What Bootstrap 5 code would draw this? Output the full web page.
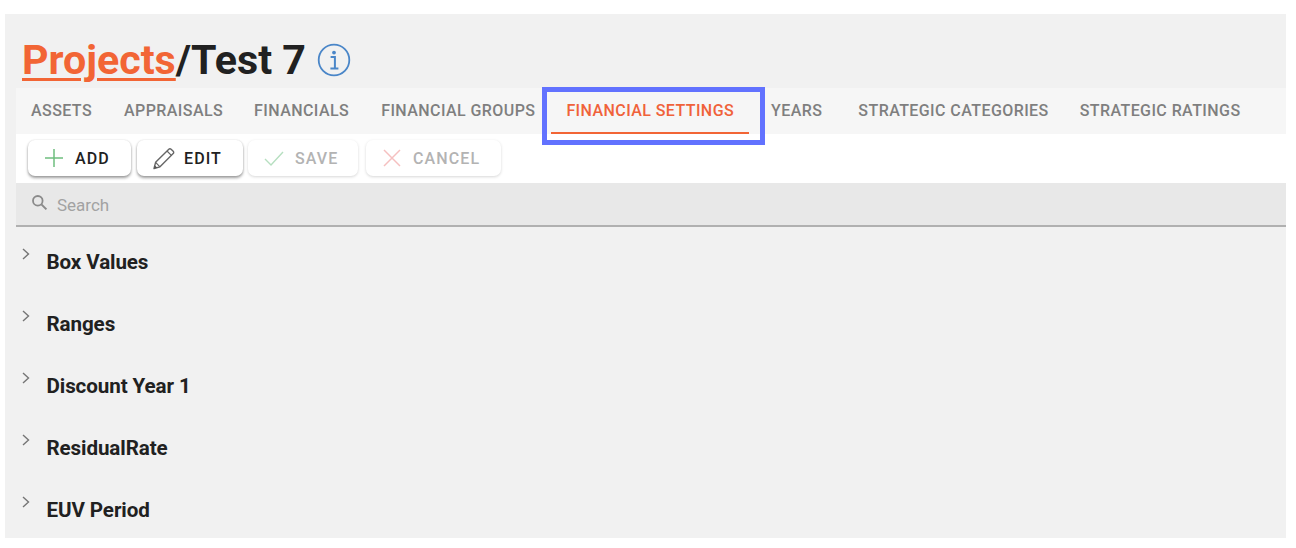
<!DOCTYPE html>
<html lang="en">
<head>
<meta charset="utf-8">
<title>Test 7</title>
<link href="https://cdn.jsdelivr.net/npm/bootstrap@5.3.0/dist/css/bootstrap.min.css" rel="stylesheet">
<style>
html,body{height:100%;background:#fff;overflow:hidden}
body{font-family:Roboto,"Liberation Sans",sans-serif;color:#212121}
.shell{margin:14px 10px 0 5px;height:524px;background:#f1f1f1;padding-left:11px;position:relative;overflow:hidden}
.page-head{height:74px;padding:24px 0 0 6px;font-size:41.2px;font-weight:700;line-height:45px;display:flex;align-items:flex-start;white-space:nowrap}
.page-head a{color:#f26535;text-decoration-thickness:3px;text-underline-offset:4px}
.info-ic{margin:5px 0 0 11px}
.tabs-bar{height:46px;background:#f6f6f6;display:flex;padding-left:0}
.tab-lnk{height:46px;padding:0 15px;display:flex;align-items:center;font-size:16px;font-weight:500;letter-spacing:.42px;color:#7f7f7f;white-space:nowrap;text-decoration:none;position:relative}
.tab-lnk.on{color:#f0623a;margin:0 7px 0 0}
.tab-lnk.on::after{content:"";position:absolute;left:0;right:0;bottom:0;height:2px;background:#f26535}
.tab-a{margin-right:2px}.tab-b{margin-right:1px}.tab-f{margin-right:2px}.tab-c{margin-right:1px}.tab-y{margin-right:6px}.tab-s{margin-right:1px}
.tool-row{height:49px;background:#fff;display:flex;align-items:flex-start;gap:5px;padding:6px 0 0 12px}
.tool-btn{height:36px;border:0;background:#fff;border-radius:7px;display:flex;align-items:center;font-size:16px;font-weight:500;letter-spacing:1.1px;color:#212121;padding:2px 0 0 16px;box-shadow:0 2px 3px rgba(0,0,0,.38),0 0 2px rgba(0,0,0,.12)}
.tool-btn svg{margin-right:11px;flex:none;margin-top:-2px}
.tool-btn:disabled{color:#b3b3b3;box-shadow:0 1px 3px rgba(0,0,0,.16)}
.w-add{width:103px}.w-edit{width:106px;margin-left:1px;padding-left:15px}.w-edit svg{margin-right:8px}.w-save{width:110px}.w-cancel{width:135px;margin-left:3px}
.search-row{height:44px;background:#e8e8e8;border-bottom:2px solid #b0b0b0;display:flex;align-items:center;padding:3px 0 0 15px;font-size:17px;color:#a2a2a2}
.search-row svg{margin-right:9px;margin-top:-6px}
.grp-row{height:62px;display:flex;align-items:flex-start;padding-top:23px;font-size:20.6px;font-weight:700;line-height:24px;color:#212121;letter-spacing:-.1px;white-space:nowrap}
.grp-row svg{margin:-3px 15.5px 0 5px;flex:none}
.hilite{position:absolute;left:537px;top:73px;width:223px;height:58px;border:5px solid #6272ff;pointer-events:none}
</style>
</head>
<body>
<div class="shell">
  <div class="page-head"><a href="#">Projects</a><span>/Test 7</span>
    <svg class="info-ic" width="34" height="34" viewBox="0 0 34 34" fill="none" aria-hidden="true"><circle cx="17" cy="17" r="15.3" stroke="#4a86c8" stroke-width="1.8"/><circle cx="17" cy="9.6" r="1.9" fill="#4a86c8"/><path d="M13.6 14h4.3v11.2M13.4 25.4h8" stroke="#4a86c8" stroke-width="2"/></svg>
  </div>
  <nav class="tabs-bar">
    <a class="tab-lnk tab-a" href="#">ASSETS</a>
    <a class="tab-lnk tab-b" href="#">APPRAISALS</a>
    <a class="tab-lnk tab-f" href="#">FINANCIALS</a>
    <a class="tab-lnk tab-c" href="#">FINANCIAL GROUPS</a>
    <a class="tab-lnk on" href="#">FINANCIAL SETTINGS</a>
    <a class="tab-lnk tab-y" href="#">YEARS</a>
    <a class="tab-lnk tab-s" href="#">STRATEGIC CATEGORIES</a>
    <a class="tab-lnk" href="#">STRATEGIC RATINGS</a>
  </nav>
  <div class="tool-row">
    <button class="tool-btn w-add" type="button"><svg width="20" height="20" viewBox="0 0 20 20" aria-hidden="true"><path d="M10 1v18M1 10h18" stroke="#6fbf7f" stroke-width="1.5" fill="none"/></svg>ADD</button>
    <button class="tool-btn w-edit" type="button"><svg width="24" height="23" viewBox="0 0 24 23" fill="none" aria-hidden="true"><path d="M2 21.5l1.6-6.2L16.8 2.2a1.6 1.6 0 0 1 2.3 0l2.1 2.1a1.6 1.6 0 0 1 0 2.3L8 19.8z" stroke="#666" stroke-width="1.4" stroke-linejoin="round"/><path d="M3.6 15.3L8 19.8M15 4l4.6 4.6" stroke="#666" stroke-width="1.2"/><path d="M2 21.5l.8-3.3 2.5 2.5z" fill="#555"/></svg>EDIT</button>
    <button class="tool-btn w-save" type="button" disabled><svg width="20" height="20" viewBox="0 0 20 20" aria-hidden="true"><path d="M1 11l6 6L19 4" stroke="#b6dfc0" stroke-width="1.4" fill="none"/></svg>SAVE</button>
    <button class="tool-btn w-cancel" type="button" disabled><svg width="20" height="20" viewBox="0 0 20 20" aria-hidden="true"><path d="M2 2l16 16M18 2L2 18" stroke="#f5c0c0" stroke-width="1.5" fill="none"/></svg>CANCEL</button>
  </div>
  <div class="search-row"><svg width="17" height="17" viewBox="0 0 17 17" fill="none" aria-hidden="true"><circle cx="6.8" cy="6.8" r="4.8" stroke="#8a8a8a" stroke-width="1.8"/><path d="M10.4 10.4l5 5" stroke="#8a8a8a" stroke-width="2"/></svg>Search</div>
  <div>
    <div class="grp-row"><svg width="10" height="14" viewBox="0 0 10 14" fill="none" aria-hidden="true"><path d="M2 2l5.5 5L2 12" stroke="#757575" stroke-width="1.4"/></svg>Box Values</div>
    <div class="grp-row"><svg width="10" height="14" viewBox="0 0 10 14" fill="none" aria-hidden="true"><path d="M2 2l5.5 5L2 12" stroke="#757575" stroke-width="1.4"/></svg>Ranges</div>
    <div class="grp-row"><svg width="10" height="14" viewBox="0 0 10 14" fill="none" aria-hidden="true"><path d="M2 2l5.5 5L2 12" stroke="#757575" stroke-width="1.4"/></svg>Discount Year 1</div>
    <div class="grp-row"><svg width="10" height="14" viewBox="0 0 10 14" fill="none" aria-hidden="true"><path d="M2 2l5.5 5L2 12" stroke="#757575" stroke-width="1.4"/></svg>ResidualRate</div>
    <div class="grp-row"><svg width="10" height="14" viewBox="0 0 10 14" fill="none" aria-hidden="true"><path d="M2 2l5.5 5L2 12" stroke="#757575" stroke-width="1.4"/></svg>EUV Period</div>
  </div>
  <div class="hilite"></div>
</div>
<script src="https://cdn.jsdelivr.net/npm/bootstrap@5.3.0/dist/js/bootstrap.bundle.min.js"></script>
</body>
</html>
